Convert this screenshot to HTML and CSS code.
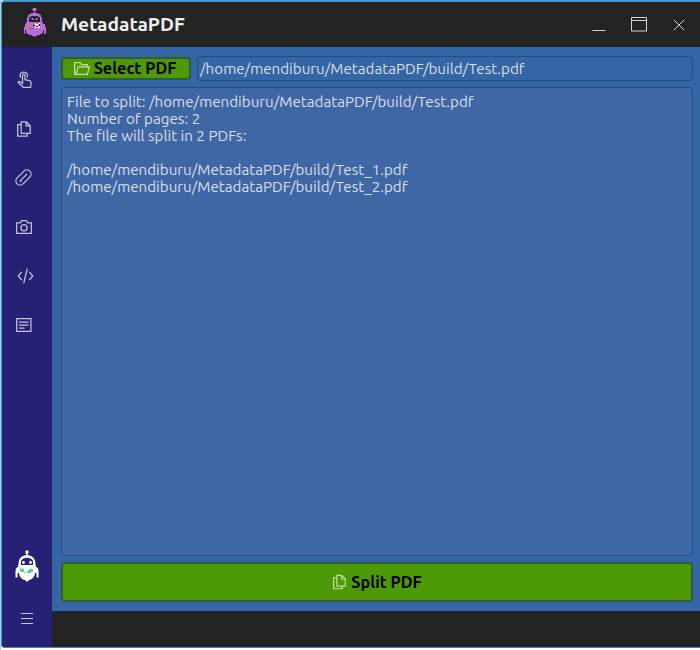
FILE: index.html
```
<!DOCTYPE html>
<html lang="en">
<head>
<meta charset="utf-8">
<title>MetadataPDF</title>
<link rel="stylesheet" href="styles.css">
</head>
<body>
<svg class="defs" width="0" height="0">
  <defs>
    <symbol id="pages" viewBox="0 0 16 16">
      <path d="M5.200.9h5.200l3.800 3.800v7.700H5.200z M10.200 1v3.800h3.900 M5 3.500H1.700v11.700h9.300v-2.500"/>
    </symbol>
    <symbol id="robot" viewBox="0 0 24 32">
      <path d="M11.300 2h1.400v5h-1.400z"/><circle cx="12" cy="2" r="1.700"/>
      <path fill-rule="evenodd" d="M3.500 14C3.500 8.500 7 5 12 5s8.500 3.500 8.500 9L21 17c2 .5 2.500 2 2.500 5v5.500h-2v-4l-1.500-1c0 4-2.500 7-6 7.500L12 32l-2-2c-3.500-.5-6-3.500-6-7.500l-1.500 1v4h-2V22c0-3 .5-4.500 2.500-5zM6 11v4h12v-4C17 8.500 14.500 7.800 12 7.800S7 8.500 6 11z"/>
      <circle cx="8.500" cy="12.500" r="1.400"/><circle cx="15.500" cy="12.500" r="1.400"/>
    </symbol>
  </defs>
</svg>
<div class="window">
  <header class="titlebar">
    <svg class="logo" width="22" height="29" viewBox="0 0 22 29" shape-rendering="crispEdges">
      <g fill="#bb6ada">
        <path d="M9 0h3v1h1v1h-1v1h-1v2h-1V3H9V2H8V1h1z"/>
        <path fill-rule="evenodd" d="M7 5h7v1h2v1h1v2h1v5h1v2h2v3h1v7h-2v-4h-1v3h-1v1h-2v1h-3v1H8v-1H5v-1H3v-1H2v-3H1v4H0v-7h1v-3h1v-2h1V9h1V7h1V6h2zM7 8v1H5v5h11V9h-2V8z"/>
        <path d="M7 10h2v1h1v1H8v-1H7z M14 10h-2v1h-1v1h2v-1h1z M8 27h5v1h-2v1h-1v-1H8z"/>
      </g>
      <path fill="#d38b26" d="M4 17h3v2H6v1H4z"/>
      <path fill="#8a5aab" d="M5 20h5v1H5z"/>
      <path fill="#f5eef0" d="M11 15h5v5h-5z"/>
      <path fill="#292229" d="M9 17h2v1H9z M12 18h2v1h-2z M15 16h1v2h-1z"/>
      <path fill="#df3d48" d="M12 15h2v1h-2z M14 17h1v1h-1z"/>
    </svg>
    <h1 class="title">MetadataPDF</h1>
    <div class="controls">
      <svg width="14" height="14" viewBox="0 0 14 14"><path d="M.5 12.500h13"/></svg>
      <svg class="maximize" width="16" height="15" viewBox="0 0 16 15"><path d="M.5.5h15v13.500H.5z M.5 3.500h15"/></svg>
      <svg width="12" height="12" viewBox="0 0 12 12"><path d="M.8.8l10.400 10.400M11.200.8L.8 11.200"/></svg>
    </div>
  </header>
  <div class="main">
    <nav class="sidebar">
      <div class="item item-touch"><svg width="16" height="17" viewBox="0 0 16 17"><path d="M5.500 10.500V4.500c0-1.800 2.500-1.800 2.500 0v4.200l4.500.9c1.200.3 1.700 1 1.600 2.200l-.5 4.500H6.300L1.300 11.700c-.6-.8.300-1.600 1.200-1.100l3 2V10 M3.800 6.700C1.900 3.600 3.700 1 6.700 1s4.900 2.600 3.200 5.500"/></svg></div>
      <div class="item"><svg width="16" height="16"><use href="#pages"/></svg></div>
      <div class="item item-clip"><svg width="17" height="17" viewBox="0 0 17 17"><g transform="rotate(-45 8.500 8.500)"><rect x="-.5" y="4.300" width="18" height="8.400" rx="4.200"/><path d="M4 10V8.500h9.500"/></g></svg></div>
      <div class="item"><svg width="16" height="14" viewBox="0 0 16 14"><path d="M.6 2.800h3.700L5.600.6h4.800l1.300 2.200h3.700v10.600H.6z"/><circle cx="8" cy="7.800" r="3.100"/></svg></div>
      <div class="item item-code"><svg width="17" height="16" viewBox="0 0 17 16"><path d="M4.700 3.800L1.200 8l3.500 4M12.300 3.800L15.800 8l-3.500 4M10.300.7L6.700 15.300"/></svg></div>
      <div class="item"><svg width="16" height="14" viewBox="0 0 16 14"><path d="M.7.7h14.200v12.600H.7z M3 4h9.500 M3 7h9.500 M3 10h5.500"/></svg></div>
      <div class="spacer"></div>
      <svg class="mascot" width="24" height="32" viewBox="0 0 24 32"><use href="#robot"/><g class="lights"><path d="M5 18.500h4v3.500H5z M12 20.500h2V19h4v3h-2v1h-4z M9 22h1v1H9z"/></g></svg>
      <svg class="menu" width="12" height="11" viewBox="0 0 12 11"><path d="M0 .5h12M0 5.500h12M0 10.500h12"/></svg>
    </nav>
    <div class="workspace">
      <main class="content">
        <div class="file-row">
          <button class="btn btn-select"><svg width="16" height="13" viewBox="0 0 16 13"><path d="M2 12.300H.7V.7h5.200l1.500 1.800h5.800v2.300 M2 12.300l2.300-7.500h11l-2 7.500z"/></svg><span>Select PDF</span></button>
          <div class="path">/home/mendiburu/MetadataPDF/build/Test.pdf</div>
        </div>
        <div class="log"><div>File to split: /home/mendiburu/MetadataPDF/build/Test.pdf</div><div>Number of pages: 2</div><div>The file will split in 2 PDFs:</div><br><div>/home/mendiburu/MetadataPDF/build/Test_1.pdf</div><div>/home/mendiburu/MetadataPDF/build/Test_2.pdf</div></div>
        <button class="btn btn-split"><svg width="15" height="16"><use href="#pages"/></svg><span>Split PDF</span></button>
      </main>
      <footer class="footer"></footer>
    </div>
  </div>
</div>
</body>
</html>
```
FILE: styles.css
```
* { box-sizing: border-box; }
body { margin: 0; background: #fff; font-family: Ubuntu, "Noto Sans", sans-serif; }
.defs { display: block; height: 0; }
svg { flex: none; fill: none; stroke: #c3c4d6; stroke-width: 1.25; }
.window {
  width: 700px;
  height: 648px;
  display: flex;
  flex-direction: column;
  border: 1px solid #398abe;
  border-right: 0;
  border-left-color: #3f98c8;
  border-top: 2px solid #4297cd;
  border-radius: 4px 0 0 4px;
  background: #232323;
  overflow: hidden;
}
body { padding-left: 1px; background: linear-gradient(90deg, #a9d0e2 1px, #fff 1px); overflow: hidden; }
.window { width: 699px; }
.titlebar { height: 45px; display: flex; align-items: center; padding: 0 15px 0 22px; flex: none; }
.logo { stroke: none; margin: 0 1px 4px 0; }
.title { margin: 0 0 2px 14px; color: #eee; font-size: 19.2px; line-height: 24px; font-weight: 700; white-space: nowrap; }
.controls { margin-left: auto; display: flex; align-items: center; gap: 26px; }
.controls svg { stroke: #d4d4d4; stroke-width: 1; }
.controls svg:first-child { margin-right: -1px; }
.main { flex: 1; display: flex; min-height: 0; }
.sidebar { width: 50px; background: #272175; display: flex; flex-direction: column; align-items: center; padding-top: 8px; }
.item { width: 100%; height: 49px; display: flex; justify-content: center; align-items: center; padding-right: 6px; }
.item-touch { padding-right: 4px; }
.item-clip { padding-right: 8px; }
.item-code { padding-right: 4px; }
.spacer { flex: 1; }
.mascot { fill: #fff; stroke: none; margin-bottom: 31px; }
.lights { fill: #55d887; }
.menu { margin-bottom: 23px; stroke-width: 1; }
.workspace { flex: 1; display: flex; flex-direction: column; min-width: 0; }
.content { flex: 1; display: flex; flex-direction: column; gap: 6px; padding: 9px 7px 9px 9px; background: #3465a5; }
.file-row { height: 25px; display: flex; gap: 6px; align-items: center; }
.btn { display: flex; align-items: center; justify-content: center; background: #4e9a06; border: 2px solid #315c38; border-radius: 4px; color: #000; font: 700 16.2px/20px Ubuntu, "Noto Sans", sans-serif; padding: 0; white-space: nowrap; }
.btn span { margin-top: -1px; }
.btn svg { stroke: #c5dba9; margin-right: 4px; }
.btn-select { width: 130px; height: 23px; padding-right: 2px; }
.btn-split { width: 100%; height: 40px; }
.path, .log { border: 1px solid #254b83; border-radius: 4px; color: #dadfe5; font-size: 15.170px; white-space: nowrap; }
.path { flex: 1; height: 25px; line-height: 23px; padding-left: 2px; }
.log { flex: 1; background: #4067a5; line-height: 17px; padding: 5px; }
.footer { height: 36px; flex: none; background: #232323; }
```
